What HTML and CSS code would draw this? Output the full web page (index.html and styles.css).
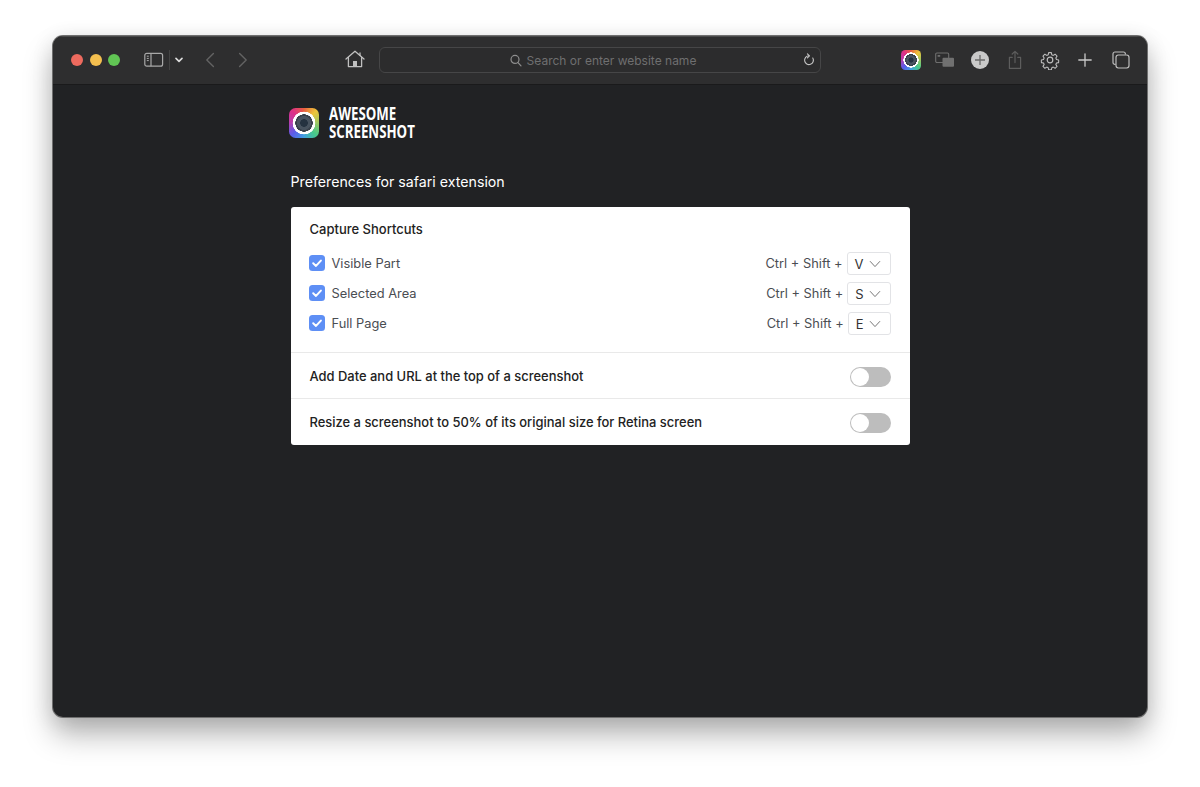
FILE: index.html
```html
<!DOCTYPE html>
<html lang="en">
<head>
<meta charset="utf-8">
<title>Awesome Screenshot Preferences</title>
<link rel="stylesheet" href="styles.css">
</head>
<body>
<svg class="defs" width="0" height="0" aria-hidden="true">
  <defs>
    <symbol id="check" viewBox="0 0 16 16">
      <rect width="16" height="16" rx="3.5" fill="#5e8ff5"/>
      <path d="M4.2 8.3 7 10.9 11.9 5.6" fill="none" stroke="#fff" stroke-width="2" stroke-linecap="round" stroke-linejoin="round"/>
    </symbol>
    <symbol id="chev" viewBox="0 0 12 8">
      <path d="M1 1.2 6 6.6 11 1.2" fill="none" stroke="#777" stroke-width="1"/>
    </symbol>
  </defs>
</svg>

<main class="window">
  <header class="toolbar">
    <div class="lights">
      <span class="light red"></span>
      <span class="light yellow"></span>
      <span class="light green"></span>
    </div>
    <svg class="i-sidebar" width="20" height="16" viewBox="0 0 20 16" fill="none" stroke="#a8a8a8" stroke-width="1.2">
      <rect x=".8" y="1.4" width="17.8" height="12.8" rx="2"/>
      <path d="M7 1.4v12.8"/>
      <path d="M2.8 4.2h2M2.8 6.4h2M2.8 8.6h2" stroke-width="1"/>
    </svg>
    <span class="sep"></span>
    <svg class="i-drop" width="8" height="6" viewBox="0 0 8 6" fill="none" stroke="#dcdcdc" stroke-width="1.6" stroke-linecap="round" stroke-linejoin="round">
      <path d="M1 1.4 4 4.4 7 1.4"/>
    </svg>
    <svg class="i-back" width="10" height="16" viewBox="0 0 10 16" fill="none" stroke="#626262" stroke-width="1.4" stroke-linecap="round" stroke-linejoin="round">
      <path d="M8.4 1.4 1.8 8l6.6 6.6"/>
    </svg>
    <svg class="i-fwd" width="10" height="16" viewBox="0 0 10 16" fill="none" stroke="#626262" stroke-width="1.4" stroke-linecap="round" stroke-linejoin="round">
      <path d="M1.6 1.4 8.2 8l-6.6 6.6"/>
    </svg>
    <svg class="i-home" width="20" height="18" viewBox="0 0 20 18" fill="none" stroke="#c0c0c0" stroke-width="1.3" stroke-linejoin="round" stroke-linecap="round">
      <path d="M1 9 10 1.2 19 9"/>
      <path d="M3.4 7.4V16.6H16.6V7.4"/>
      <path d="M15 3V5.4"/>
      <rect x="8" y="11" width="4" height="5.6" fill="#c0c0c0" stroke="none"/>
    </svg>
    <div class="url">
      <svg width="12" height="13" viewBox="0 0 12 13" fill="none" stroke="#8e8e8e" stroke-width="1.2" stroke-linecap="round">
        <circle cx="5" cy="5.4" r="4"/>
        <path d="M8 8.6 11 11.8"/>
      </svg>
      <span class="url-text">Search or enter website name</span>
      <svg class="i-reload" width="12" height="14" viewBox="0 0 12 14" fill="none" stroke="#c4c4c4" stroke-width="1.1" stroke-linecap="round" stroke-linejoin="round">
        <path d="M6 2.8A4.4 4.4 0 1 0 9.8 5"/>
        <path d="M4.4 .8 6.4 2.8 4.4 4.8"/>
      </svg>
    </div>
    <div class="actions">
      <span class="logo logo-small"></span>
      <svg class="act-tabs" width="20" height="16" viewBox="0 0 20 16">
        <rect x=".7" y="1" width="13" height="9.5" rx="1.2" fill="none" stroke="#6e6e6e" stroke-width="1.1"/>
        <rect x="2.6" y="3" width="2.6" height="1.8" fill="#6e6e6e"/>
        <rect x="7.5" y="5.8" width="11.5" height="9" rx="1" fill="#707070"/>
      </svg>
      <svg width="20" height="20" viewBox="0 0 20 20">
        <circle cx="10" cy="10" r="9" fill="#c9c9c9"/>
        <path d="M10 5v10M5 10h10" stroke="#6a6a6a" stroke-width="1.3"/>
      </svg>
      <svg width="20" height="20" viewBox="0 0 20 20" fill="none" stroke="#5d5d5d" stroke-width="1.2" stroke-linejoin="round" stroke-linecap="round">
        <path d="M7.2 7.4H4.4V18.4H15.6V7.4H12.8"/>
        <path d="M10 12.6V1.4M7.2 4 10 1.4 12.8 4"/>
      </svg>
      <svg width="20" height="20" viewBox="0 0 20 20" fill="none" stroke="#bdbdbd" stroke-width="1.2" stroke-linejoin="round">
        <path d="M8.5 1.8h3l.5 2.4 1.6.7 2.1-1.3 2.1 2.1-1.3 2.1.7 1.6 2.4.5v3l-2.4.5-.7 1.6 1.3 2.1-2.1 2.1-2.1-1.3-1.6.7-.5 2.4h-3l-.5-2.4-1.6-.7-2.1 1.3-2.1-2.1 1.3-2.1-.7-1.6-2.4-.5v-3l2.4-.5.7-1.6-1.3-2.1 2.1-2.1 2.1 1.3 1.6-.7z" transform="translate(1 1) scale(.9)"/>
        <circle cx="10" cy="10" r="2.8"/>
      </svg>
      <svg width="20" height="20" viewBox="0 0 20 20" stroke="#c9c9c9" stroke-width="1.3" stroke-linecap="round">
        <path d="M10 3.8v12.4M3.8 10h12.4"/>
      </svg>
      <svg class="act-windows" width="20" height="20" viewBox="0 0 20 20" fill="none" stroke="#bdbdbd" stroke-width="1.2">
        <path d="M4.6 14.4H4a2 2 0 0 1-2-2V4a2 2 0 0 1 2-2h8.4a2 2 0 0 1 2 2v.6"/>
        <rect x="5" y="5" width="13" height="13" rx="2.4"/>
      </svg>
    </div>
  </header>

  <section class="page">
    <div class="column">
      <div class="brand">
        <span class="logo"></span>
        <div class="brand-name">AWESOME<br>SCREENSHOT</div>
      </div>
      <h1 class="title">Preferences for safari extension</h1>
      <div class="card">
        <div class="shortcuts">
          <h2 class="card-heading">Capture Shortcuts</h2>
          <div class="row">
            <svg class="box" width="16" height="16"><use href="#check"/></svg>
            <span class="row-label">Visible Part</span>
            <span class="combo">Ctrl + Shift +</span>
            <span class="key"><span>V</span><svg width="12" height="8"><use href="#chev"/></svg></span>
          </div>
          <div class="row">
            <svg class="box" width="16" height="16"><use href="#check"/></svg>
            <span class="row-label">Selected Area</span>
            <span class="combo">Ctrl + Shift +</span>
            <span class="key"><span>S</span><svg width="12" height="8"><use href="#chev"/></svg></span>
          </div>
          <div class="row">
            <svg class="box" width="16" height="16"><use href="#check"/></svg>
            <span class="row-label">Full Page</span>
            <span class="combo">Ctrl + Shift +</span>
            <span class="key"><span>E</span><svg width="12" height="8"><use href="#chev"/></svg></span>
          </div>
        </div>
        <div class="setting">
          <span>Add Date and URL at the top of a screenshot</span>
          <span class="switch"></span>
        </div>
        <div class="setting">
          <span>Resize a screenshot to 50% of its original size for Retina screen</span>
          <span class="switch"></span>
        </div>
      </div>
    </div>
  </section>
</main>
</body>
</html>
```

FILE: styles.css
```css
* { box-sizing: border-box; }

html, body {
  height: 100%;
}

body {
  margin: 0;
  padding: 36px 53px 70px;
  background: #fff;
  font-family: Inter, "Liberation Sans", sans-serif;
  overflow: hidden;
}

.defs { position: absolute; }

.window {
  height: 681px;
  display: flex;
  flex-direction: column;
  background: #212224;
  border-radius: 10px;
  overflow: hidden;
  box-shadow:
    0 0 0 1px #6f6f6f,
    0 18px 30px rgba(0, 0, 0, .28),
    0 4px 22px rgba(0, 0, 0, .12);
}

.toolbar {
  flex: none;
  height: 49px;
  display: flex;
  align-items: center;
  padding: 0 0 1px 18px;
  background: #2e2e2f;
  border-bottom: 1px solid #1a1a1b;
  border-top: 1px solid #4a4a4a;
}

.lights { display: flex; gap: 6.5px; }
.light { width: 12px; height: 12px; border-radius: 50%; }
.red { background: #ed6a5e; }
.yellow { background: #f4bf4f; }
.green { background: #61c554; }

.i-sidebar { margin-left: 24px; }
.sep { width: 1px; height: 20px; margin-left: 5px; background: #444; }
.i-drop { margin-left: 5px; }
.i-back { margin-left: 22px; }
.i-fwd { margin-left: 23px; }
.i-home { margin-left: 97px; margin-top: -2px; }

.url {
  width: 442px;
  height: 26px;
  margin-left: 14px;
  padding-left: 6px;
  display: flex;
  align-items: center;
  justify-content: center;
  gap: 5px;
  position: relative;
  border: 1px solid #464647;
  border-radius: 6px;
  background: #2c2c2d;
}

.url-text {
  color: #6f6f70;
  font-size: 12px;
}

.i-reload {
  position: absolute;
  right: 5px;
  top: 5px;
}

.actions {
  display: flex;
  align-items: center;
  gap: 15px;
  margin-left: 80px;
}

.act-tabs { margin-left: -1px; }
.act-windows { margin-left: 1px; }

.logo {
  flex: none;
  display: block;
  width: 30px;
  height: 30px;
  border-radius: 22%;
  background:
    radial-gradient(circle closest-side, #253240 0 24%, #48535f 27% 45%, #39414b 48% 57%, #fff 59% 75%, transparent 77%),
    conic-gradient(#e8603f, #eec53a 45deg, #47c98a 135deg, #3fa0e0 180deg, #5a5ce8 225deg, #b53fb0 270deg, #dd2f88 315deg, #e8603f);
}

.logo-small {
  width: 20px;
  height: 20px;
}

.page {
  flex: 1;
  display: flex;
  justify-content: center;
}

.column {
  width: 619px;
  padding-top: 20px;
}

.brand {
  display: flex;
  align-items: center;
  gap: 10px;
  margin-left: -2px;
}

.brand-name {
  color: #fff;
  font-family: "Open Sans", "Liberation Sans", sans-serif;
  font-weight: 700;
  font-size: 17px;
  line-height: 18px;
  transform: scaleX(.78);
  transform-origin: left center;
}

.title {
  margin: 31px 0 0;
  color: #fff;
  font-size: 14.2px;
  line-height: 20px;
  font-weight: 400;
}

.card {
  margin-top: 15px;
  background: #fff;
  border-radius: 3px;
}

.shortcuts {
  padding: 14px 19px 14px;
  border-bottom: 1px solid #e9e9e9;
}

.card-heading {
  margin: 0 0 11px;
  color: #222;
  font-size: 13px;
  line-height: 16px;
  font-weight: 500;
}

.row {
  height: 30px;
  display: flex;
  align-items: center;
  color: #4a4d52;
  font-size: 12.85px;
}

.box { flex: none; margin-left: -1px; }
.row-label { margin-left: 7px; flex: 1; }
.combo { margin-right: 4px; padding-top: 1px; }

.key {
  height: 23px;
  margin-top: 1px;
  padding: 0 9px 0 7px;
  display: flex;
  align-items: center;
  gap: 5px;
  border: 1px solid #e2e3e6;
  border-radius: 3px;
  color: #333;
  font-size: 13px;
}

.setting {
  height: 45px;
  padding: 0 19px;
  display: flex;
  align-items: center;
  justify-content: space-between;
  color: #222;
  font-size: 12.95px;
  font-weight: 500;
}

.setting + .setting {
  height: 47px;
  border-top: 1px solid #e9e9e9;
}

.switch {
  position: relative;
  width: 41px;
  height: 20px;
  margin-top: 2px;
  border-radius: 10px;
  background: #bdbdbd;
}

.switch::after {
  content: "";
  position: absolute;
  left: 1px;
  top: 1px;
  width: 18px;
  height: 18px;
  border-radius: 50%;
  background: #fff;
}
```
